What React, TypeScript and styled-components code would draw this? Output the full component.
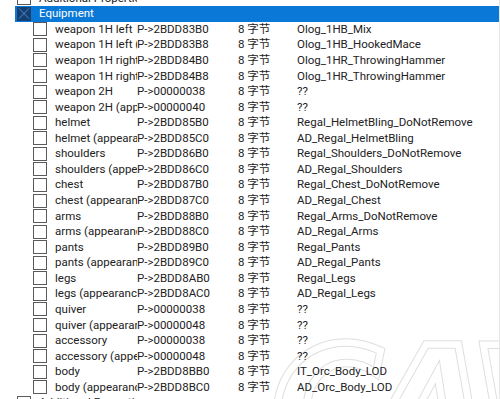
import React from 'react';
import styled, { createGlobalStyle } from 'styled-components';

const GlobalStyle = createGlobalStyle`
    html, body {
        margin: 0;
        padding: 0;
        background: #ffffff;
    }
    body {
        font-family: Roboto, "Noto Sans CJK SC", sans-serif;
        font-size: 11.5px;
        color: #222222;
    }
`;

interface Entry {
    name: string;
    ptr: string;
    size: string;
    value: string;
}

const entries: Entry[] = [
    { name: 'weapon 1H left', ptr: 'P->2BDD83B0', size: '8 字节', value: 'Olog_1HB_Mix' },
    { name: 'weapon 1H left (appearance)', ptr: 'P->2BDD83B8', size: '8 字节', value: 'Olog_1HB_HookedMace' },
    { name: 'weapon 1H right', ptr: 'P->2BDD84B0', size: '8 字节', value: 'Olog_1HR_ThrowingHammer' },
    { name: 'weapon 1H right (appearance)', ptr: 'P->2BDD84B8', size: '8 字节', value: 'Olog_1HR_ThrowingHammer' },
    { name: 'weapon 2H', ptr: 'P->00000038', size: '8 字节', value: '??' },
    { name: 'weapon 2H (appearance)', ptr: 'P->00000040', size: '8 字节', value: '??' },
    { name: 'helmet', ptr: 'P->2BDD85B0', size: '8 字节', value: 'Regal_HelmetBling_DoNotRemove' },
    { name: 'helmet (appearance)', ptr: 'P->2BDD85C0', size: '8 字节', value: 'AD_Regal_HelmetBling' },
    { name: 'shoulders', ptr: 'P->2BDD86B0', size: '8 字节', value: 'Regal_Shoulders_DoNotRemove' },
    { name: 'shoulders (appearance)', ptr: 'P->2BDD86C0', size: '8 字节', value: 'AD_Regal_Shoulders' },
    { name: 'chest', ptr: 'P->2BDD87B0', size: '8 字节', value: 'Regal_Chest_DoNotRemove' },
    { name: 'chest (appearance)', ptr: 'P->2BDD87C0', size: '8 字节', value: 'AD_Regal_Chest' },
    { name: 'arms', ptr: 'P->2BDD88B0', size: '8 字节', value: 'Regal_Arms_DoNotRemove' },
    { name: 'arms (appearance)', ptr: 'P->2BDD88C0', size: '8 字节', value: 'AD_Regal_Arms' },
    { name: 'pants', ptr: 'P->2BDD89B0', size: '8 字节', value: 'Regal_Pants' },
    { name: 'pants (appearance)', ptr: 'P->2BDD89C0', size: '8 字节', value: 'AD_Regal_Pants' },
    { name: 'legs', ptr: 'P->2BDD8AB0', size: '8 字节', value: 'Regal_Legs' },
    { name: 'legs (appearance)', ptr: 'P->2BDD8AC0', size: '8 字节', value: 'AD_Regal_Legs' },
    { name: 'quiver', ptr: 'P->00000038', size: '8 字节', value: '??' },
    { name: 'quiver (appearance)', ptr: 'P->00000048', size: '8 字节', value: '??' },
    { name: 'accessory', ptr: 'P->00000038', size: '8 字节', value: '??' },
    { name: 'accessory (appearance)', ptr: 'P->00000048', size: '8 字节', value: '??' },
    { name: 'body', ptr: 'P->2BDD8BB0', size: '8 字节', value: 'IT_Orc_Body_LOD' },
    { name: 'body (appearance)', ptr: 'P->2BDD8BC0', size: '8 字节', value: 'AD_Orc_Body_LOD' },
];

// faint site watermark behind the list
const Watermark: React.FC = () => (
    <Mark viewBox="0 0 500 399" width="500" height="399">
        <text x="272" y="454" className="outer">CAV</text>
        <text x="272" y="454" className="inner">CAV</text>
    </Mark>
);

const Check: React.FC<{ checked?: boolean; selected?: boolean }> = ({ checked, selected }) => (
    <Box $selected={selected}>
        {checked && (
            <svg width="13" height="13" viewBox="0 0 13 13">
                <path d="M1 1 L12 12 M12 1 L1 12" stroke="#5f8fc7" strokeWidth="1" fill="none" />
            </svg>
        )}
    </Box>
);

const App: React.FC = () => {
    return (
        <>
            <GlobalStyle />
            <Viewport>
                <Watermark />
                <List>
                    <Row $level={0}>
                        <Check />
                        <NameCell>Additional Properties</NameCell>
                    </Row>
                    <Row $level={0} $selected>
                        <Check checked selected />
                        <NameCell>Equipment</NameCell>
                    </Row>
                    {entries.map((e, i) => (
                        <Row key={i} $level={1}>
                            <Check />
                            <NameCell>{e.name}</NameCell>
                            <Cell>{e.ptr}</Cell>
                            <Cell>{e.size}</Cell>
                            <Cell>{e.value}</Cell>
                        </Row>
                    ))}
                    <Row $level={0}>
                        <Check />
                        <NameCell>Additional Properties</NameCell>
                    </Row>
                </List>
            </Viewport>
        </>
    );
};

const Viewport = styled.div`
    position: relative;
    width: 500px;
    height: 399px;
    overflow: hidden;
    background: #ffffff;
    border-right: 1px solid #e6e6e6;
    box-sizing: border-box;
`;

const Mark = styled.svg`
    position: absolute;
    left: 0;
    top: 0;
    z-index: 0;
    text {
        font-family: "DejaVu Sans", sans-serif;
        font-weight: bold;
        font-style: italic;
        font-size: 150px;
        letter-spacing: -8px;
        fill: none;
    }
    .outer {
        stroke: #dedede;
        stroke-width: 8.5;
    }
    .inner {
        stroke: #ffffff;
        stroke-width: 6.5;
    }
`;

const List = styled.div`
    position: relative;
    z-index: 1;
    margin-top: -9.6px;
    display: flex;
    flex-direction: column;
`;

const Row = styled.div<{ $level: number; $selected?: boolean }>`
    display: grid;
    grid-template-columns: ${({ $level }) => `22px ${$level === 0 ? 98 : 82}px 101px 59px 1fr`};
    align-items: center;
    height: 15.57px;
    padding-left: ${({ $level }) => ($level === 0 ? 17 : 33)}px;
    white-space: nowrap;
    background: ${({ $selected }) =>
        $selected ? 'linear-gradient(to right, transparent 15px, #0a78d7 15px)' : 'transparent'};
    color: ${({ $selected }) => ($selected ? '#ffffff' : '#222222')};
`;

const Box = styled.div<{ $selected?: boolean }>`
    width: 14px;
    height: 14px;
    box-sizing: border-box;
    border: 1px solid ${({ $selected }) => ($selected ? '#1d3f6b' : '#5a5a5a')};
    background: ${({ $selected }) => ($selected ? '#123f73' : '#ffffff')};
    display: flex;
    align-items: center;
    justify-content: center;
    svg {
        display: block;
    }
`;

const Cell = styled.div`
    overflow: hidden;
    line-height: 15px;
`;

const NameCell = styled(Cell)``;

export default App;
